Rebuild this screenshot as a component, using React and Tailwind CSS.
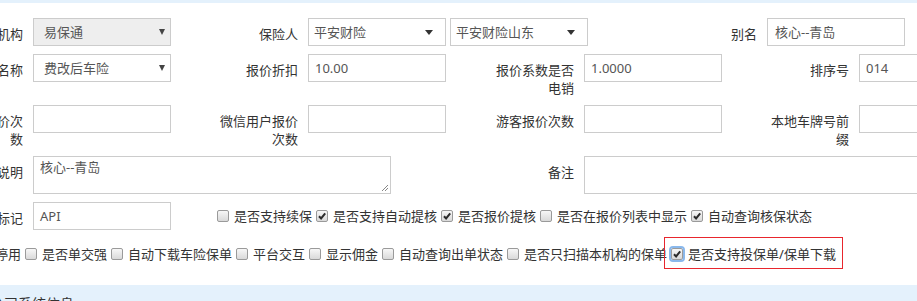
import React from 'react';

// field widths follow the bootstrap-ish form in the screenshot
const INPUT = 'h-[28px] w-[138px] shrink-0 border border-[#ccc] bg-white px-[6px] leading-[26px] text-[#555]';

function Arrow({ wide }) {
  return wide ? (
    <svg width="8" height="5" viewBox="0 0 8 5" className="shrink-0">
      <polygon points="0,0 8,0 4,5" fill="#333" />
    </svg>
  ) : (
    <svg width="6" height="6" viewBox="0 0 6 6" className="shrink-0">
      <polygon points="0,0 6,0 3,6" fill="#444" />
    </svg>
  );
}

function Select({ value, disabled, wide, className = '' }) {
  return (
    <div
      className={`flex h-[28px] w-[138px] shrink-0 items-center justify-between border border-[#ccc] leading-[26px] text-[#555] ${
        disabled ? 'bg-[#eee]' : 'bg-white'
      } ${wide ? 'pl-[5px] pr-[12px]' : 'pl-[10px] pr-[5px]'} ${className}`}
    >
      <span>{value}</span>
      <Arrow wide={wide} />
    </div>
  );
}

function Label({ children, narrow }) {
  return (
    <div className={`${narrow ? 'w-[45px]' : 'w-[88px]'} mr-[10px] shrink-0 pt-[7px] text-right leading-[18px] text-[#333]`}>
      {children}
    </div>
  );
}

function Cell({ label, narrow, children, width }) {
  return (
    <div className={`flex shrink-0 justify-end ${width}`}>
      <Label narrow={narrow}>{label}</Label>
      {children}
    </div>
  );
}

function Box({ checked, focus }) {
  return (
    <span
      className={`relative inline-flex h-[12px] w-[12px] shrink-0 items-center justify-center rounded-[2px] border border-[#9a9a9a] bg-linear-to-b from-[#f7f7f7] to-[#d9d9d9] ${
        focus ? 'outline-2 outline-[#8ab8ec]' : ''
      }`}
    >
      {checked && (
        <svg width="10" height="10" viewBox="0 0 10 10">
          <path d="M2 5.2 L4.1 7.4 L8.2 2.4" fill="none" stroke="#2b2b2b" strokeWidth="2" />
        </svg>
      )}
    </span>
  );
}

function Check({ label, checked, focus, marked }) {
  return (
    <span className="relative mr-[4px] flex shrink-0 items-center">
      <Box checked={checked} focus={focus} />
      <span className="ml-[5px] whitespace-nowrap leading-[18px] text-[#333]">{label}</span>
      {marked && <span className="absolute -top-[8px] -bottom-[6px] -left-[7px] -right-[7px] border border-[#e8262d]" />}
    </span>
  );
}

export default function App() {
  return (
    <div className="h-[301px] w-[917px] overflow-hidden bg-white text-[13px] font-['Microsoft_YaHei','Noto_Sans','Noto_Sans_CJK_SC',sans-serif]">
      <div className="h-[3px] bg-[#e4f1fc]" />

      <div className="-ml-[104px] w-[1100px] pt-[15px]">
        {/* row 1 */}
        <div className="mb-[8px] flex">
          <Cell label="机构" narrow width="w-[275px]">
            <Select value="易保通" disabled />
          </Cell>
          <Cell label="保险人" width="w-[275px]">
            <Select value="平安财险" wide />
          </Cell>
          <Select value="平安财险山东" wide className="ml-[4px]" />
          <Cell label="别名" width="w-[317px]">
            <div className={`${INPUT} pl-[7px]`}>核心--青岛</div>
          </Cell>
        </div>

        {/* row 2 */}
        <div className="mb-[8px] flex">
          <Cell label="名称" narrow width="w-[275px]">
            <Select value="费改后车险" />
          </Cell>
          <Cell label="报价折扣" width="w-[275px]">
            <div className={INPUT}>10.00</div>
          </Cell>
          <Cell label="报价系数是否电销" width="w-[276px]">
            <div className={INPUT}>1.0000</div>
          </Cell>
          <Cell label="排序号" width="w-[275px]">
            <div className={INPUT}>014</div>
          </Cell>
        </div>

        {/* row 3 */}
        <div className="mb-[8px] flex">
          <Cell label="报价次数" narrow width="w-[275px]">
            <div className={INPUT} />
          </Cell>
          <Cell label="微信用户报价次数" width="w-[275px]">
            <div className={INPUT} />
          </Cell>
          <Cell label="游客报价次数" width="w-[276px]">
            <div className={INPUT} />
          </Cell>
          <Cell label="本地车牌号前缀" width="w-[275px]">
            <div className={INPUT} />
          </Cell>
        </div>

        {/* row 4 */}
        <div className="mb-[8px] flex">
          <div className="flex w-[137px] shrink-0 justify-end">
            <Label narrow>说明</Label>
          </div>
          <div className="relative h-[38px] w-[358px] shrink-0 border border-[#ccc] px-[6px] pt-[1px] leading-[18px] text-[#555]">
            核心--青岛
            <svg width="8" height="8" viewBox="0 0 8 8" className="absolute right-[1px] bottom-[1px]">
              <path d="M7 1 L1 7 M7 4 L4 7" stroke="#888" strokeWidth="1" />
            </svg>
          </div>
          <div className="flex w-[193px] shrink-0 justify-end">
            <Label>备注</Label>
          </div>
          <div className="h-[38px] w-[400px] shrink-0 border border-[#ccc]" />
        </div>

        {/* row 5 */}
        <div className="mb-[8px] flex items-center">
          <Cell label="标记" narrow width="w-[275px]">
            <div className={INPUT}>API</div>
          </Cell>
          <div className="ml-[46px] flex items-center">
            <Check label="是否支持续保" />
            <Check label="是否支持自动提核" checked />
            <Check label="是否报价提核" checked />
            <Check label="是否在报价列表中显示" />
            <Check label="自动查询核保状态" checked />
          </div>
        </div>

        {/* row 6 */}
        <div className="flex h-[47px] items-start pt-[7px] pl-[56px]">
          <div className="flex h-[18px] items-center">
            <Check label="是否停用" />
            <Check label="是否单交强" />
            <Check label="自动下载车险保单" />
            <Check label="平台交互" />
            <Check label="显示佣金" />
            <Check label="自动查询出单状态" />
            <Check label="是否只扫描本机构的保单" />
            <Check label="是否支持投保单/保单下载" checked focus marked />
          </div>
        </div>
      </div>

      <div className="h-[40px] bg-[#e4f1fc] pt-[10px] -ml-[10px] leading-[18px] text-[14px] text-[#333]">公司系统信息</div>
    </div>
  );
}
